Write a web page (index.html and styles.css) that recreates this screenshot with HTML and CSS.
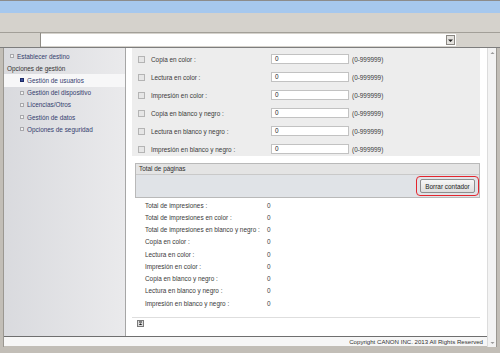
FILE: index.html
```html
<!DOCTYPE html>
<html lang="es">
<head>
    <meta charset="utf-8">
    <title>Gestión de usuarios</title>
    <link rel="stylesheet" href="styles.css">
</head>
<body>
    <div class="window">
        <div class="titlebar"></div>
        <div class="toolbar"></div>
        <div class="addressbar">
            <div class="addr-left"></div>
            <div class="addr-field">
                <span class="addr-drop">
                    <svg width="7" height="7" viewBox="0 0 7 7"><path d="M1 2.5h5L3.5 5z" fill="#222"/></svg>
                </span>
            </div>
            <div class="addr-right"></div>
        </div>
        <div class="page">
            <div class="page-main">
                <div class="page-body">
                    <nav class="sidebar">
                        <a class="nav-item top"><span class="bullet"></span>Establecer destino</a>
                        <div class="nav-group">Opciones de gestión</div>
                        <a class="nav-item sub active"><span class="bullet"></span>Gestión de usuarios</a>
                        <a class="nav-item sub"><span class="bullet"></span>Gestión del dispositivo</a>
                        <a class="nav-item sub"><span class="bullet"></span>Licencias/Otros</a>
                        <a class="nav-item sub"><span class="bullet"></span>Gestión de datos</a>
                        <a class="nav-item sub"><span class="bullet"></span>Opciones de seguridad</a>
                    </nav>
                    <main class="content">
                        <div class="limits">
                            <div class="limit-row"><span class="check"></span><span class="limit-label">Copia en color :</span><span class="field">0</span><span class="range">(0-999999)</span></div>
                            <div class="limit-row"><span class="check"></span><span class="limit-label">Lectura en color :</span><span class="field">0</span><span class="range">(0-999999)</span></div>
                            <div class="limit-row"><span class="check"></span><span class="limit-label">Impresión en color :</span><span class="field">0</span><span class="range">(0-999999)</span></div>
                            <div class="limit-row"><span class="check"></span><span class="limit-label">Copia en blanco y negro :</span><span class="field">0</span><span class="range">(0-999999)</span></div>
                            <div class="limit-row"><span class="check"></span><span class="limit-label">Lectura en blanco y negro :</span><span class="field">0</span><span class="range">(0-999999)</span></div>
                            <div class="limit-row"><span class="check"></span><span class="limit-label">Impresión en blanco y negro :</span><span class="field">0</span><span class="range">(0-999999)</span></div>
                        </div>

                        <div class="totals-box">
                            <div class="totals-head">Total de páginas</div>
                            <div class="totals-bar">
                                <span class="marked"><button class="btn">Borrar contador</button></span>
                            </div>
                        </div>

                        <div class="stats">
                            <div class="stat"><span class="stat-label">Total de impresiones :</span><span>0</span></div>
                            <div class="stat"><span class="stat-label">Total de impresiones en color :</span><span>0</span></div>
                            <div class="stat"><span class="stat-label">Total de impresiones en blanco y negro :</span><span>0</span></div>
                            <div class="stat"><span class="stat-label">Copia en color :</span><span>0</span></div>
                            <div class="stat"><span class="stat-label">Lectura en color :</span><span>0</span></div>
                            <div class="stat"><span class="stat-label">Impresión en color :</span><span>0</span></div>
                            <div class="stat"><span class="stat-label">Copia en blanco y negro :</span><span>0</span></div>
                            <div class="stat"><span class="stat-label">Lectura en blanco y negro :</span><span>0</span></div>
                            <div class="stat"><span class="stat-label">Impresión en blanco y negro :</span><span>0</span></div>
                        </div>

                        <div class="page-end">
                            <svg class="to-top" width="7" height="7" viewBox="0 0 7 7">
                                <rect x="0.5" y="0.5" width="6" height="6" fill="#dcdcdc" stroke="#7a7a7a"/>
                                <path d="M2 2h3" stroke="#222"/>
                                <path d="M1.8 5L3.5 3.2 5.2 5z" fill="#222"/>
                            </svg>
                        </div>
                    </main>
                </div>
                <footer class="footer">Copyright CANON INC. 2013 All Rights Reserved</footer>
            </div>
            <div class="scrollbar">
                <svg width="5" height="4" viewBox="0 0 5 4"><path d="M0.5 3L2.5 1 4.5 3z" fill="#9a9a9a"/></svg>
                <svg width="5" height="4" viewBox="0 0 5 4"><path d="M0.5 1L2.5 3 4.5 1z" fill="#9a9a9a"/></svg>
            </div>
        </div>
        <div class="statusbar"></div>
    </div>
</body>
</html>
```

FILE: styles.css
```css
* {
    padding: 0;
    margin: 0;
    box-sizing: border-box;
}

body {
    background-color: #bdbab3;
    font-family: "Liberation Sans", Arial, sans-serif;
    font-size: 6.4px;
    color: #3a3a3a;
}

.window {
    width: 500px;
    height: 353px;
    display: flex;
    flex-direction: column;
    border-top: 1px solid #8c8c8c;
    background-color: #c2beb7;
}

.titlebar {
    height: 12px;
    background-color: #a6c8ee;
}

.toolbar {
    height: 20px;
    background-color: #d5d2cc;
    border-bottom: 1px solid #a29f98;
}

.addressbar {
    height: 15px;
    display: flex;
    background-color: #d5d2cc;
    border-bottom: 1px solid #7d7d7d;
}

.addr-left {
    width: 41px;
    border-right: 1px solid #8f8c86;
}

.addr-field {
    width: 415px;
    margin: 1px 0;
    background-color: #ffffff;
    display: flex;
    justify-content: flex-end;
    align-items: center;
    padding-right: 1px;
}

.addr-drop {
    width: 9px;
    height: 10px;
    display: flex;
    align-items: center;
    justify-content: center;
    background-color: #e4e2de;
    border: 1px solid #8a8782;
}

.addr-right {
    flex: 1;
}

.page {
    height: 299px;
    display: flex;
    margin: 0 3px;
    border-left: 1px solid #9a9791;
    border-right: 1px solid #9a9791;
}

.page-main {
    flex: 1;
    display: flex;
    flex-direction: column;
}

.page-body {
    height: 288px;
    display: flex;
    overflow: hidden;
}

.sidebar {
    width: 122px;
    background: linear-gradient(to right, #d9dade, #eaeaec);
    border-right: 1px solid #a6a6a6;
    padding-top: 2px;
}

.nav-item,
.nav-group {
    display: flex;
    align-items: center;
    height: 12.2px;
    white-space: nowrap;
}

.nav-item {
    color: #34406e;
}

.nav-group {
    color: #333333;
    padding-left: 3px;
}

.nav-item.top {
    padding-left: 6px;
}

.nav-item.sub {
    padding-left: 16px;
}

.nav-item.active {
    background-color: #f7f7f8;
}

.bullet {
    width: 4px;
    height: 4px;
    margin-right: 3px;
    border: 1px solid #a8a8ac;
    background-color: #f2f2f2;
}

.nav-item.active .bullet {
    border-color: #1e2c68;
    background-color: #3b4f9a;
}

.content {
    flex: 1;
    background-color: #ffffff;
    padding: 0 7px 0 6px;
}

.limits {
    background-color: #ededed;
    padding: 6px 0 2px 6px;
    display: flex;
    flex-direction: column;
    gap: 8px;
}

.limit-row {
    height: 10px;
    display: flex;
    align-items: center;
}

.check {
    width: 7px;
    height: 7px;
    border: 1px solid #b4b4b4;
    background-color: #e6e6e6;
    margin-right: 6px;
}

.limit-label {
    width: 120px;
}

.field {
    width: 78px;
    height: 10px;
    background-color: #ffffff;
    border: 1px solid #c2c2c2;
    padding-left: 3px;
    line-height: 8px;
    color: #222222;
}

.range {
    margin-left: 3px;
}

.totals-box {
    margin: 7px 0 0 3px;
    border: 1px solid #b9b9b9;
}

.totals-head {
    height: 11px;
    line-height: 10px;
    padding-left: 3px;
    background-color: #e4e4e4;
    border-bottom: 1px solid #c9c9c9;
    color: #2f2f2f;
}

.totals-bar {
    height: 22px;
    background-color: #e0e3e7;
    display: flex;
    align-items: center;
    justify-content: flex-end;
    padding-right: 4px;
}

.marked {
    position: relative;
    display: flex;
}

.marked::after {
    content: "";
    position: absolute;
    top: -3px;
    bottom: -3px;
    left: -4px;
    right: -4px;
    border: 1.5px solid #e3262e;
    border-radius: 4px;
}

.btn {
    font-family: "Liberation Sans", Arial, sans-serif;
    font-size: 6.4px;
    color: #222222;
    width: 55px;
    height: 14px;
    border: 1px solid #8e8e8e;
    border-radius: 2px;
    background: linear-gradient(#f7f7f7, #dedede);
}

.stats {
    padding: 1px 0 0 13px;
}

.stat {
    height: 12.25px;
    display: flex;
    align-items: center;
    white-space: nowrap;
}

.stat-label {
    width: 122px;
}

.page-end {
    margin-top: 8px;
    border-top: 1px solid #dedede;
    padding: 2px 0 0 5px;
}

.to-top {
    display: block;
}

.footer {
    height: 10px;
    border-top: 1px solid #6f6f6f;
    background-color: #f6f6f6;
    text-align: right;
    padding-right: 4px;
    line-height: 9px;
    font-size: 6.1px;
    color: #333333;
}

.scrollbar {
    width: 9px;
    background-color: #f3f3f3;
    border-left: 1px solid #dcdcdc;
    display: flex;
    flex-direction: column;
    justify-content: space-between;
    align-items: center;
    padding: 3px 0 2px;
}

.statusbar {
    flex: 1;
    background-color: #c2beb7;
}
```
